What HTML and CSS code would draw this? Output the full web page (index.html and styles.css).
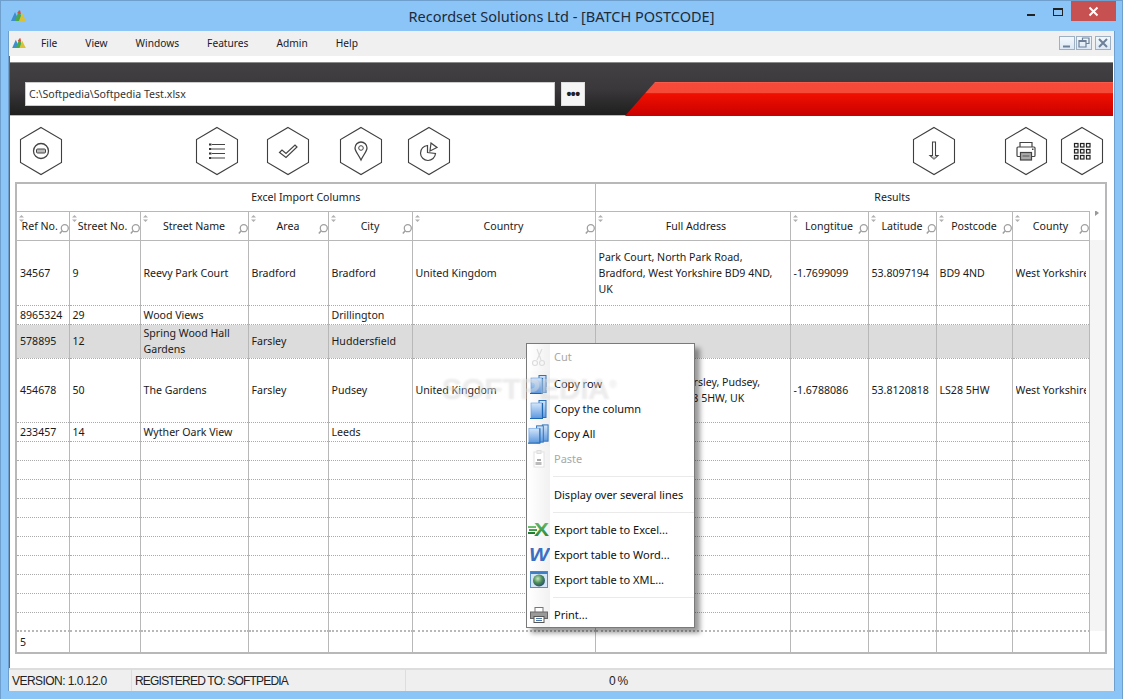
FILE: index.html
```html
<!DOCTYPE html>
<html>
<head>
    <title>Recordset Solutions Ltd - [BATCH POSTCODE]</title>
    <link rel="stylesheet" href="styles.css">
</head>
<body>
    <svg class="defs" width="0" height="0">
        <defs>
            <linearGradient id="doc" x1="0" y1="0" x2="0" y2="1">
                <stop offset="0" stop-color="#d5e6fa"/>
                <stop offset="1" stop-color="#5f9ae0"/>
            </linearGradient>
            <linearGradient id="green" x1="0" y1="0" x2="0" y2="1">
                <stop offset="0" stop-color="#6fc26f"/>
                <stop offset="1" stop-color="#1c7a2e"/>
            </linearGradient>
            <radialGradient id="globe" cx="0.4" cy="0.35" r="0.7">
                <stop offset="0" stop-color="#c6e8c0"/>
                <stop offset="0.5" stop-color="#4f8f5a"/>
                <stop offset="1" stop-color="#24476f"/>
            </radialGradient>
            <symbol id="i-hex" viewBox="0 0 44 50">
                <polygon points="22,1.5 42.5,13.5 42.5,36.5 22,48.5 1.5,36.5 1.5,13.5" fill="#fff" stroke="#3f3f3f" stroke-width="1.1"/>
            </symbol>
            <symbol id="i-sort" viewBox="0 0 5 7">
                <path d="M2.5 0 L5 2.5 H0 Z M0 4.5 H5 L2.5 7 Z" fill="#b0b0b0"/>
            </symbol>
            <symbol id="i-find" viewBox="0 0 10 10">
                <circle cx="5.8" cy="4.2" r="3.5" fill="none" stroke="#a0a0a0" stroke-width="1.3"/>
                <path d="M3.2 6.8 L0.8 9.4" stroke="#a0a0a0" stroke-width="1.5"/>
            </symbol>
            <symbol id="i-logo" viewBox="0 0 15 11">
                <polygon points="0,11 4,2 8,11" fill="#3d8fd0"/>
                <polygon points="4,11 8,0 12,11" fill="#4aa84a"/>
                <polygon points="8,11 11,3 15,11" fill="#d9c23a"/>
                <polygon points="6,3 9,0 10,4" fill="#d8503c"/>
            </symbol>
            <symbol id="i-copy" viewBox="0 0 22 22">
                <rect x="11" y="2.5" width="7" height="17" fill="url(#doc)" stroke="#2f72b8"/>
                <rect x="3" y="5" width="11" height="15" fill="url(#doc)" stroke="#5f9ae0" stroke-width="0.6"/>
                <path d="M2 20.5 H15 M14.5 5 V20" stroke="#1f66b0" stroke-width="1.1"/>
            </symbol>
            <symbol id="i-copyall" viewBox="0 0 24 22">
                <rect x="16" y="1.5" width="6" height="17" fill="url(#doc)" stroke="#2f72b8"/>
                <rect x="10" y="2.5" width="7" height="17" fill="url(#doc)" stroke="#2f72b8"/>
                <rect x="2" y="5" width="11" height="15" fill="url(#doc)" stroke="#5f9ae0" stroke-width="0.6"/>
                <path d="M1 20.5 H14 M13.5 5 V20" stroke="#1f66b0" stroke-width="1.1"/>
            </symbol>
        </defs>
    </svg>

    <div class="titlebar">
        <svg class="app-icon"><use href="#i-logo"/></svg>
        <div class="title">Recordset Solutions Ltd - [BATCH POSTCODE]</div>
        <div class="caption">
            <span class="cap-min"></span>
            <span class="cap-max"></span>
            <span class="cap-close">
                <svg width="11" height="11" viewBox="0 0 11 11"><path d="M1.5 1.5 L9.5 9.5 M9.5 1.5 L1.5 9.5" stroke="#fff" stroke-width="2"/></svg>
            </span>
        </div>
    </div>

    <div class="client">
        <div class="menubar">
            <svg class="menu-icon"><use href="#i-logo"/></svg>
            <span>File</span>
            <span>View</span>
            <span>Windows</span>
            <span>Features</span>
            <span>Admin</span>
            <span>Help</span>
            <div class="mdi">
                <span class="mdi-btn"><svg width="14" height="12" viewBox="0 0 14 12"><path d="M3 9.5 H10" stroke="#6d8098" stroke-width="2"/></svg></span>
                <span class="mdi-btn"><svg width="14" height="12" viewBox="0 0 14 12"><path d="M5.5 3 V1 H12 V6.500 H9.500 M2 3.500 H9 V10 H2 Z M2 4.500 H9" fill="none" stroke="#6d8098" stroke-width="1.200"/></svg></span>
                <span class="mdi-btn mdi-close"><svg width="14" height="12" viewBox="0 0 14 12"><path d="M3 2 L11 10 M11 2 L3 10" stroke="#6d8098" stroke-width="2"/></svg></span>
            </div>
        </div>

        <div class="banner">
            <div class="banner-red"></div>
            <input class="path" type="text" value="C:\Softpedia\Softpedia Test.xlsx">
            <button class="browse">•••</button>
        </div>

        <div class="toolbar">
            <svg class="hex" viewBox="0 0 44 50">
                <use href="#i-hex" width="44" height="50"/>
                <circle cx="22" cy="25" r="7.500" fill="none" stroke="#444" stroke-width="1.300"/>
                <rect x="17.500" y="23" width="9" height="4" rx="1" fill="#bbb" stroke="#444"/>
            </svg>
            <svg class="hex" viewBox="0 0 44 50">
                <use href="#i-hex" width="44" height="50"/>
                <path d="M17 18.500 H30 M17 23 H30 M17 27.500 H30 M17 32 H30" stroke="#444" stroke-width="1.200"/>
                <path d="M14 18.500 H16.500 M14 23 H16.500 M14 27.500 H16.500 M14 32 H16.500" stroke="#333" stroke-width="2"/>
            </svg>
            <svg class="hex" viewBox="0 0 44 50">
                <use href="#i-hex" width="44" height="50"/>
                <path d="M13.500 26.500 L16 24 L20 27.500 L29 19 L31 21 L20 31.500 Z" fill="none" stroke="#444" stroke-width="1.200"/>
            </svg>
            <svg class="hex" viewBox="0 0 44 50">
                <use href="#i-hex" width="44" height="50"/>
                <path d="M22 34 C19 28 16 25 16 22 A6 6 0 0 1 28 22 C28 25 25 28 22 34 Z" fill="none" stroke="#444" stroke-width="1.300"/>
                <circle cx="22" cy="22" r="2.300" fill="none" stroke="#444"/>
            </svg>
            <svg class="hex" viewBox="0 0 44 50">
                <use href="#i-hex" width="44" height="50"/>
                <path d="M20.500 19.500 A7.500 7.500 0 1 0 28.500 27.500 L20.500 26.500 Z" fill="none" stroke="#444" stroke-width="1.200"/>
                <path d="M24 17 L30 21.500 L23 25 Z" fill="none" stroke="#444" stroke-width="1.200"/>
            </svg>
            <svg class="hex" viewBox="0 0 44 50">
                <use href="#i-hex" width="44" height="50"/>
                <path d="M20.500 16 H23.500 V29.500 H26 L22 33 L18 29.500 H20.500 Z" fill="#fff" stroke="#444" stroke-width="1.100"/>
                <path d="M19.500 30.500 L22 33 L24.500 30.500" fill="#bbb"/>
            </svg>
            <svg class="hex" viewBox="0 0 44 50">
                <use href="#i-hex" width="44" height="50"/>
                <path d="M16 22 V16.500 H28 V22" fill="none" stroke="#444" stroke-width="1.200"/>
                <rect x="13" y="21" width="18" height="9.500" rx="1" fill="#fff" stroke="#444" stroke-width="1.200"/>
                <rect x="16.500" y="26.500" width="11" height="7.500" fill="#aaa" stroke="#444" stroke-width="1.200"/>
                <path d="M18.500 30 H25.500" stroke="#555"/>
                <rect x="28" y="22.500" width="1.500" height="1.500" fill="#444"/>
            </svg>
            <svg class="hex" viewBox="0 0 44 50">
                <use href="#i-hex" width="44" height="50"/>
                <g fill="none" stroke="#222" stroke-width="1.200">
                    <rect x="14.500" y="17.500" width="3.500" height="3.500"/>
                    <rect x="20.500" y="17.500" width="3.500" height="3.500"/>
                    <rect x="26.500" y="17.500" width="3.500" height="3.500"/>
                    <rect x="14.500" y="23.500" width="3.500" height="3.500"/>
                    <rect x="20.500" y="23.500" width="3.500" height="3.500"/>
                    <rect x="26.500" y="23.500" width="3.500" height="3.500"/>
                    <rect x="14.500" y="29.500" width="3.500" height="3.500"/>
                    <rect x="20.500" y="29.500" width="3.500" height="3.500"/>
                    <rect x="26.500" y="29.500" width="3.500" height="3.500"/>
                </g>
            </svg>
        </div>

        <div class="grid-wrap">
            <table class="grid">
                <colgroup>
                    <col class="c-ref"><col class="c-no"><col class="c-street"><col class="c-area"><col class="c-city"><col class="c-country">
                    <col class="c-full"><col class="c-long"><col class="c-lat"><col class="c-post"><col class="c-county"><col class="c-scroll">
                </colgroup>
                <tr class="r-group">
                    <th colspan="6">Excel Import Columns</th>
                    <th colspan="6" class="results">Results</th>
                </tr>
                <tr class="r-head">
                    <th class="tight-a"><svg class="sort"><use href="#i-sort"/></svg>Ref No.<svg class="find"><use href="#i-find"/></svg></th>
                    <th class="tight-b"><svg class="sort"><use href="#i-sort"/></svg>Street No.<svg class="find"><use href="#i-find"/></svg></th>
                    <th><svg class="sort"><use href="#i-sort"/></svg>Street Name<svg class="find"><use href="#i-find"/></svg></th>
                    <th><svg class="sort"><use href="#i-sort"/></svg>Area<svg class="find"><use href="#i-find"/></svg></th>
                    <th><svg class="sort"><use href="#i-sort"/></svg>City<svg class="find"><use href="#i-find"/></svg></th>
                    <th><svg class="sort"><use href="#i-sort"/></svg>Country<svg class="find"><use href="#i-find"/></svg></th>
                    <th class="th-full"><svg class="sort"><use href="#i-sort"/></svg>Full Address</th>
                    <th><svg class="sort"><use href="#i-sort"/></svg>Longtitue<svg class="find"><use href="#i-find"/></svg></th>
                    <th><svg class="sort"><use href="#i-sort"/></svg>Latitude<svg class="find"><use href="#i-find"/></svg></th>
                    <th><svg class="sort"><use href="#i-sort"/></svg>Postcode<svg class="find"><use href="#i-find"/></svg></th>
                    <th><svg class="sort"><use href="#i-sort"/></svg>County<svg class="find"><use href="#i-find"/></svg></th>
                    <th class="head-scroll"><span class="arrow-right"></span></th>
                </tr>
                <tr class="r-65">
                    <td>34567</td><td>9</td><td>Reevy Park Court</td><td>Bradford</td><td>Bradford</td><td>United Kingdom</td>
                    <td class="wrap">Park Court, North Park Road, Bradford, West Yorkshire BD9 4ND, UK</td>
                    <td>-1.7699099</td><td>53.8097194</td><td>BD9 4ND</td><td><div class="clip">West Yorkshire</div></td>
                    <td class="track" rowspan="15"></td>
                </tr>
                <tr class="r-19"><td>8965324</td><td>29</td><td>Wood Views</td><td></td><td>Drillington</td><td></td><td></td><td></td><td></td><td></td><td></td></tr>
                <tr class="r-34 selected">
                    <td>578895</td><td>12</td><td class="wrap">Spring Wood Hall Gardens</td><td>Farsley</td><td>Huddersfield</td><td></td><td></td><td></td><td></td><td></td><td></td>
                </tr>
                <tr class="r-64">
                    <td>454678</td><td>50</td><td>The Gardens</td><td>Farsley</td><td>Pudsey</td><td>United Kingdom</td>
                    <td class="wrap">50 The Gardens, Farsley, Pudsey, West Yorkshire LS28 5HW, UK</td>
                    <td>-1.6788086</td><td>53.8120818</td><td>LS28 5HW</td><td><div class="clip">West Yorkshire</div></td>
                </tr>
                <tr class="r-19"><td>233457</td><td>14</td><td>Wyther Oark View</td><td></td><td>Leeds</td><td></td><td></td><td></td><td></td><td></td><td></td></tr>
                <tr class="r-19"><td></td><td></td><td></td><td></td><td></td><td></td><td></td><td></td><td></td><td></td><td></td></tr>
                <tr class="r-19"><td></td><td></td><td></td><td></td><td></td><td></td><td></td><td></td><td></td><td></td><td></td></tr>
                <tr class="r-19"><td></td><td></td><td></td><td></td><td></td><td></td><td></td><td></td><td></td><td></td><td></td></tr>
                <tr class="r-19"><td></td><td></td><td></td><td></td><td></td><td></td><td></td><td></td><td></td><td></td><td></td></tr>
                <tr class="r-19"><td></td><td></td><td></td><td></td><td></td><td></td><td></td><td></td><td></td><td></td><td></td></tr>
                <tr class="r-19"><td></td><td></td><td></td><td></td><td></td><td></td><td></td><td></td><td></td><td></td><td></td></tr>
                <tr class="r-19"><td></td><td></td><td></td><td></td><td></td><td></td><td></td><td></td><td></td><td></td><td></td></tr>
                <tr class="r-19"><td></td><td></td><td></td><td></td><td></td><td></td><td></td><td></td><td></td><td></td><td></td></tr>
                <tr class="r-19"><td></td><td></td><td></td><td></td><td></td><td></td><td></td><td></td><td></td><td></td><td></td></tr>
                <tr class="r-19"><td></td><td></td><td></td><td></td><td></td><td></td><td></td><td></td><td></td><td></td><td></td></tr>
                <tr class="r-foot"><td>5</td><td></td><td></td><td></td><td></td><td></td><td></td><td></td><td></td><td></td><td></td><td class="foot-scroll"></td></tr>
            </table>
        </div>

        <div class="statusbar">
            <div class="st-version">VERSION: 1.0.12.0</div>
            <div class="st-reg">REGISTERED TO: SOFTPEDIA</div>
            <div class="st-progress">0 %</div>
        </div>
    </div>

    <div class="watermark">SOFTPEDIA<sup>®</sup></div>

    <div class="context">
        <div class="item disabled first">
            <span class="item-icon">
                <svg width="20" height="20" viewBox="0 0 20 20"><g fill="none" stroke="#dcdcdc" stroke-width="1.100"><path d="M13 2 L8 13 M8 2 L12 13"/><circle cx="6" cy="16" r="2.500"/><circle cx="13" cy="16" r="2.500"/></g></svg>
            </span>Cut
        </div>
        <div class="item shaded"><span class="item-icon"><svg width="22" height="22"><use href="#i-copy"/></svg></span>Copy row</div>
        <div class="item shaded"><span class="item-icon"><svg width="22" height="22"><use href="#i-copy"/></svg></span>Copy the column</div>
        <div class="item shaded"><span class="item-icon"><svg width="24" height="22"><use href="#i-copyall"/></svg></span>Copy All</div>
        <div class="item disabled">
            <span class="item-icon">
                <svg width="18" height="20" viewBox="0 0 18 20"><rect x="4" y="3" width="10" height="15" fill="#fff" stroke="#e2e2e2"/><rect x="7" y="1.500" width="4" height="3" fill="#eee" stroke="#ddd"/><rect x="7" y="10" width="4" height="2" fill="#aaa"/><rect x="5.500" y="13" width="6" height="3" fill="#bbb"/></svg>
            </span>Paste
        </div>
        <div class="sep sep-wide"></div>
        <div class="item"><span class="item-icon"></span>Display over several lines</div>
        <div class="sep"></div>
        <div class="item">
            <span class="item-icon">
                <svg width="22" height="21" viewBox="0 0 22 21"><path d="M0 8 H8 M1 11 H9 M0 14 H7" stroke="url(#green)" stroke-width="2"/><text x="6" y="17" textLength="15" lengthAdjust="spacingAndGlyphs" class="logo-x">X</text></svg>
            </span>Export table to Excel...
        </div>
        <div class="item">
            <span class="item-icon">
                <svg width="22" height="21" viewBox="0 0 22 21"><text x="1" y="17" textLength="20" lengthAdjust="spacingAndGlyphs" class="logo-w">W</text></svg>
            </span>Export table to Word...
        </div>
        <div class="item">
            <span class="item-icon">
                <svg width="18" height="17" viewBox="0 0 18 17"><rect x="0.500" y="0.500" width="17" height="16" fill="#d6e6f6" stroke="#5a8fc8"/><rect x="0.500" y="0.500" width="17" height="2.500" fill="#3f7fc6"/><circle cx="9" cy="9.500" r="6" fill="url(#globe)"/></svg>
            </span>Export table to XML...
        </div>
        <div class="sep"></div>
        <div class="item">
            <span class="item-icon">
                <svg width="18" height="16" viewBox="0 0 18 16"><rect x="5" y="0.500" width="8" height="5" fill="#fff" stroke="#777"/><rect x="0.500" y="5" width="17" height="6.500" fill="#9a9a9a" stroke="#666"/><rect x="4" y="9.500" width="10" height="6" fill="#fff" stroke="#555"/><path d="M6 11.500 H12 M6 13.500 H12" stroke="#4f78a8"/></svg>
            </span>Print...
        </div>
    </div>
</body>
</html>
```

FILE: styles.css
```css
* {
    box-sizing: border-box;
}
html, body {
    height: 100%;
}
body {
    margin: 0;
    background: #8bc5f8;
    border: 1px solid #6f9fcc;
    border-bottom: none;
    font-family: 'Noto Sans', sans-serif;
    font-size: 10.6px;
    color: #1a1a1a;
    overflow: hidden;
    display: flex;
    flex-direction: column;
}
.defs {
    position: absolute;
}

/* title bar */
.titlebar {
    height: 30px;
    flex: none;
    position: relative;
    display: flex;
    justify-content: center;
    align-items: center;
}
.app-icon {
    position: absolute;
    left: 10px;
    top: 9px;
    width: 15px;
    height: 11px;
}
.title {
    font-size: 14.5px;
    color: #1d2a38;
}
.caption {
    position: absolute;
    right: 6px;
    top: 0;
    display: flex;
    align-items: flex-start;
}
.cap-min {
    width: 8px;
    height: 2px;
    margin-top: 13px;
    background: #222;
}
.cap-max {
    width: 10px;
    height: 8px;
    margin: 7px 8px 0 18px;
    border: 1px solid #222;
    border-top-width: 2px;
}
.cap-close {
    width: 45px;
    height: 20px;
    background: #c75050;
    display: flex;
    align-items: center;
    justify-content: center;
}

/* client area */
.client {
    flex: 1;
    margin: 0 7px 8px;
    background: #fff;
    border: 1px solid #6f9fcc;
    border-top: none;
    border-bottom: none;
    display: flex;
    flex-direction: column;
    min-height: 0;
    box-shadow: inset 1px 0 0 #666;
}
.menubar {
    height: 25px;
    flex: none;
    background: #f0f0f0;
    display: flex;
    align-items: center;
    gap: 28px;
    padding: 0 0 2px 32px;
    position: relative;
    font-size: 10.2px;
    color: #1a1a2a;
}
.menu-icon {
    position: absolute;
    left: 3px;
    top: 7px;
    width: 14px;
    height: 10px;
}
.mdi {
    margin-left: auto;
    margin-right: 3px;
    display: flex;
    gap: 1px;
}
.mdi-btn {
    width: 16px;
    height: 14px;
    border: 1px solid #9db0c4;
    background: linear-gradient(#f4f8fc, #dbe8f5);
    display: flex;
}
.mdi-close {
    margin-left: 2px;
}

/* banner */
.banner {
    height: 54px;
    flex: none;
    margin: 6px 1px 0 1px;
    padding: 19px 0 0 15px;
    position: relative;
    border-top: 1px solid #8a8a8a;
    border-bottom: 1px solid #bbb;
    background: linear-gradient(#434143, #3a383a 50%, #1f1f1f);
    display: flex;
    align-items: flex-start;
    gap: 6px;
}
.banner-red {
    position: absolute;
    left: 615px;
    right: 0;
    top: 19px;
    bottom: -1px;
    clip-path: polygon(0 100%, 30px 0, 100% 0, 100% 100%);
    background: linear-gradient(#fb6a58 0, #f8493a 3%, #f44a36 33%, #f01000 34%, #c80000 100%);
}
.path {
    width: 530px;
    height: 24px;
    border: 1px solid #ccc;
    padding: 0 3px;
    background: #fff;
    font-family: 'Noto Sans', sans-serif;
    font-size: 10.6px;
    color: #333;
    position: relative;
}
.browse {
    width: 24px;
    height: 24px;
    border: 1px solid #ddd;
    background: #f5f5f5;
    padding: 0;
    font-size: 14px;
    font-weight: bold;
    letter-spacing: -0.5px;
    color: #222;
    position: relative;
    font-family: 'Liberation Sans', sans-serif;
}

/* toolbar */
.toolbar {
    height: 66px;
    flex: none;
    padding: 10px 0 0 10px;
    display: grid;
    grid-template-columns: 176px 71px 73px 68px 505px 92px 56px 44px;
}
.hex {
    width: 44px;
    height: 50px;
}

/* table */
.grid-wrap {
    padding-left: 6px;
    flex: none;
}
.grid {
    width: 1090px;
    table-layout: fixed;
    border-collapse: collapse;
    border: 2px solid #b8b8b8;
}
.c-ref { width: 53px; }
.c-no { width: 71px; }
.c-street { width: 108px; }
.c-area { width: 80px; }
.c-city { width: 84px; }
.c-country { width: 183px; }
.c-full { width: 195px; }
.c-long { width: 78px; }
.c-lat { width: 68px; }
.c-post { width: 76px; }
.c-county { width: 77px; }
.c-scroll { width: 17px; }
.grid th {
    font-weight: normal;
    border: 1px solid #b8b8b8;
    padding: 0;
    position: relative;
    white-space: nowrap;
    overflow: hidden;
}
.grid td {
    border-left: 1px solid #b8b8b8;
    border-right: 1px solid #b8b8b8;
    border-top: 1px dotted #aaa;
    border-bottom: 1px dotted #aaa;
    padding: 0 3px;
    white-space: nowrap;
    overflow: hidden;
    line-height: 16px;
}
.grid td.wrap {
    white-space: normal;
}
.clip {
    width: 70px;
    overflow: hidden;
}
.r-group { height: 28px; }
.r-head { height: 29px; }
.r-65 { height: 65px; }
.r-64 { height: 64px; }
.r-34 { height: 34px; }
.r-19 { height: 19px; }
.r-foot { height: 22px; }
.grid th.results {
    padding-left: 84px;
}
.grid th.tight-a {
    padding-right: 6px;
}
.grid th.tight-b {
    padding-right: 4px;
}
.grid th.th-full {
    padding-left: 7px;
}
.sort {
    position: absolute;
    left: 2px;
    top: 3px;
    width: 5px;
    height: 7px;
}
.find {
    position: absolute;
    right: 0;
    top: 12px;
    width: 10px;
    height: 10px;
}
.selected td {
    background: #dcdcdc;
}
.grid .head-scroll {
    border-top: hidden;
    border-bottom: none;
    border-right: none;
    vertical-align: top;
}
.arrow-right {
    display: block;
    width: 0;
    height: 0;
    margin: -1px 0 0 5px;
    border-left: 4px solid #999;
    border-top: 3px solid transparent;
    border-bottom: 3px solid transparent;
}
.grid td.track {
    background: #f5f5f5;
    border: none;
    border-left: 1px solid #b8b8b8;
}
.r-foot td {
    border-top: 2px dotted #b8b8b8;
    border-bottom: 2px dotted #b8b8b8;
}
.grid td.foot-scroll {
    border-top: none;
    border-bottom: 2px solid #b8b8b8;
}

/* status bar */
.statusbar {
    height: 23px;
    flex: none;
    margin-top: auto;
    background: #efefef;
    border-top: 2px solid #ddd;
    display: flex;
    align-items: center;
    font-family: 'Liberation Sans', sans-serif;
    font-size: 12px;
    letter-spacing: -0.8px;
    color: #222;
}
.statusbar > div {
    height: 100%;
    display: flex;
    align-items: center;
}
.st-version {
    width: 123px;
    padding-left: 3px;
    letter-spacing: -0.55px;
    border-right: 1px solid #ddd;
}
.st-reg {
    width: 274px;
    padding-left: 3px;
    border-right: 1px solid #ddd;
}
.st-progress {
    padding-left: 203px;
}

/* watermark */
.watermark {
    position: absolute;
    left: 442px;
    top: 372px;
    font-family: 'Liberation Sans', sans-serif;
    font-size: 30px;
    font-weight: bold;
    letter-spacing: -0.5px;
    color: rgba(255, 255, 255, 0.3);
    text-shadow: 0 0 2px rgba(170, 170, 170, 0.3);
    z-index: 3;
    pointer-events: none;
}
.watermark sup {
    font-size: 10px;
}

/* context menu */
.context {
    position: absolute;
    left: 526px;
    top: 343px;
    width: 169px;
    height: 285px;
    background: linear-gradient(to right, #fff 0, #fff 2px, #f1f1f1 23px, #fff 23px);
    border: 1px solid #7a7a7a;
    box-shadow: 5px 5px 5px rgba(0, 0, 0, 0.4);
    z-index: 2;
    font-size: 11px;
    color: #111;
}
.item {
    height: 25px;
    display: flex;
    align-items: center;
}
.item.first {
    margin-bottom: 2px;
}
.item-icon {
    width: 27px;
    height: 25px;
    flex: none;
    display: flex;
    align-items: center;
    justify-content: center;
    padding-right: 4px;
}
.item.shaded .item-icon {
    background: linear-gradient(to right, #fff 0, #efefef 23px, transparent 23px);
}
.disabled {
    color: #a8a8a8;
}
.sep {
    height: 10px;
    margin-left: 26px;
    position: relative;
}
.sep-wide {
    height: 11px;
}
.sep::after {
    content: '';
    position: absolute;
    left: 0;
    right: 0;
    top: 5px;
    height: 1px;
    background: #eaeaea;
}
.logo-x {
    font-family: 'Liberation Sans', sans-serif;
    font-weight: bold;
    font-size: 18px;
    fill: url(#green);
}
.logo-w {
    font-family: 'Liberation Sans', sans-serif;
    font-weight: bold;
    font-style: italic;
    font-size: 18px;
    fill: #3b6fc4;
}
```
